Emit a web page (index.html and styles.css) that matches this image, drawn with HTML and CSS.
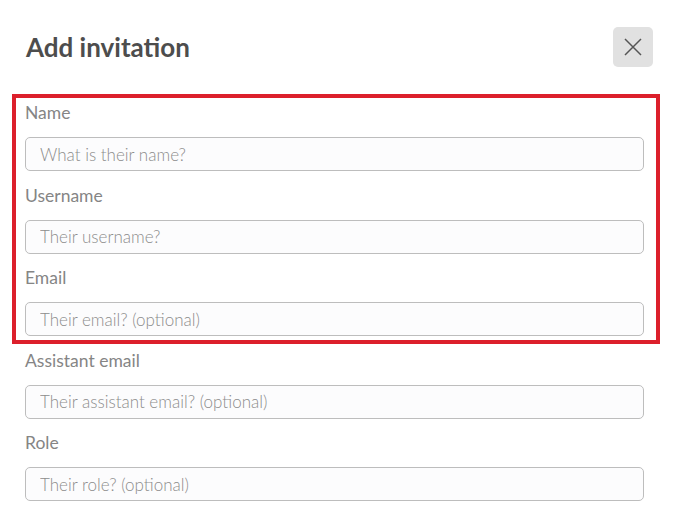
FILE: index.html
```html
<!DOCTYPE html>
<html>
<head>
<meta charset="utf-8">
<link rel="stylesheet" href="styles.css">
</head>
<body>
<div class="dialog">
  <div class="header">
    <h1 class="title">Add invitation</h1>
    <button class="close" aria-label="Close">
      <svg width="18" height="18" viewBox="0 0 18 18"><path d="M1 1 L17 17 M17 1 L1 17" stroke="#555" stroke-width="1.5" fill="none"/></svg>
    </button>
  </div>
  <form class="form">
    <div class="highlight"></div>
    <div class="field">
      <label class="label">Name</label>
      <input class="input" placeholder="What is their name?">
    </div>
    <div class="field">
      <label class="label">Username</label>
      <input class="input" placeholder="Their username?">
    </div>
    <div class="field">
      <label class="label">Email</label>
      <input class="input" placeholder="Their email? (optional)">
    </div>
    <div class="field">
      <label class="label">Assistant email</label>
      <input class="input" placeholder="Their assistant email? (optional)">
    </div>
    <div class="field">
      <label class="label">Role</label>
      <input class="input" placeholder="Their role? (optional)">
    </div>
  </form>
</div>
</body>
</html>
```
FILE: styles.css
```css
* { box-sizing: border-box; }
html, body { margin: 0; padding: 0; background: #fff; }
body { font-family: Lato, "Open Sans", sans-serif; width: 679px; height: 525px; overflow: hidden; }
.dialog { padding: 27px 35px 0 25px; }
.header { display: flex; align-items: center; justify-content: space-between; height: 40px; margin-right: -9px; }
.title { margin: 0 0 0 1px; font-size: 26px; font-weight: 700; color: #4d4d4d; letter-spacing: 0; }
.close { width: 40px; height: 40px; border: none; border-radius: 5px; background: #e1e1e1; display: flex; align-items: center; justify-content: center; padding: 0; }
.form { position: relative; margin-top: 35px; display: flex; flex-direction: column; gap: 13.5px; }
.highlight { position: absolute; left: -13px; top: -8px; width: 648px; height: 250px; border: 4px solid #dc1f2b; pointer-events: none; }
.field { display: flex; flex-direction: column; }
.label { font-size: 17.5px; line-height: 22px; color: #858585; margin-bottom: 13px; }
.input { height: 34px; width: 619px; border: 1px solid #bdbdbd; border-radius: 5px; background: #fcfcfd; padding: 0 14px; font-family: Lato, sans-serif; font-size: 17px; font-weight: 300; color: #555; outline: none; }
.input::placeholder { color: #8c8c8c; }
```
